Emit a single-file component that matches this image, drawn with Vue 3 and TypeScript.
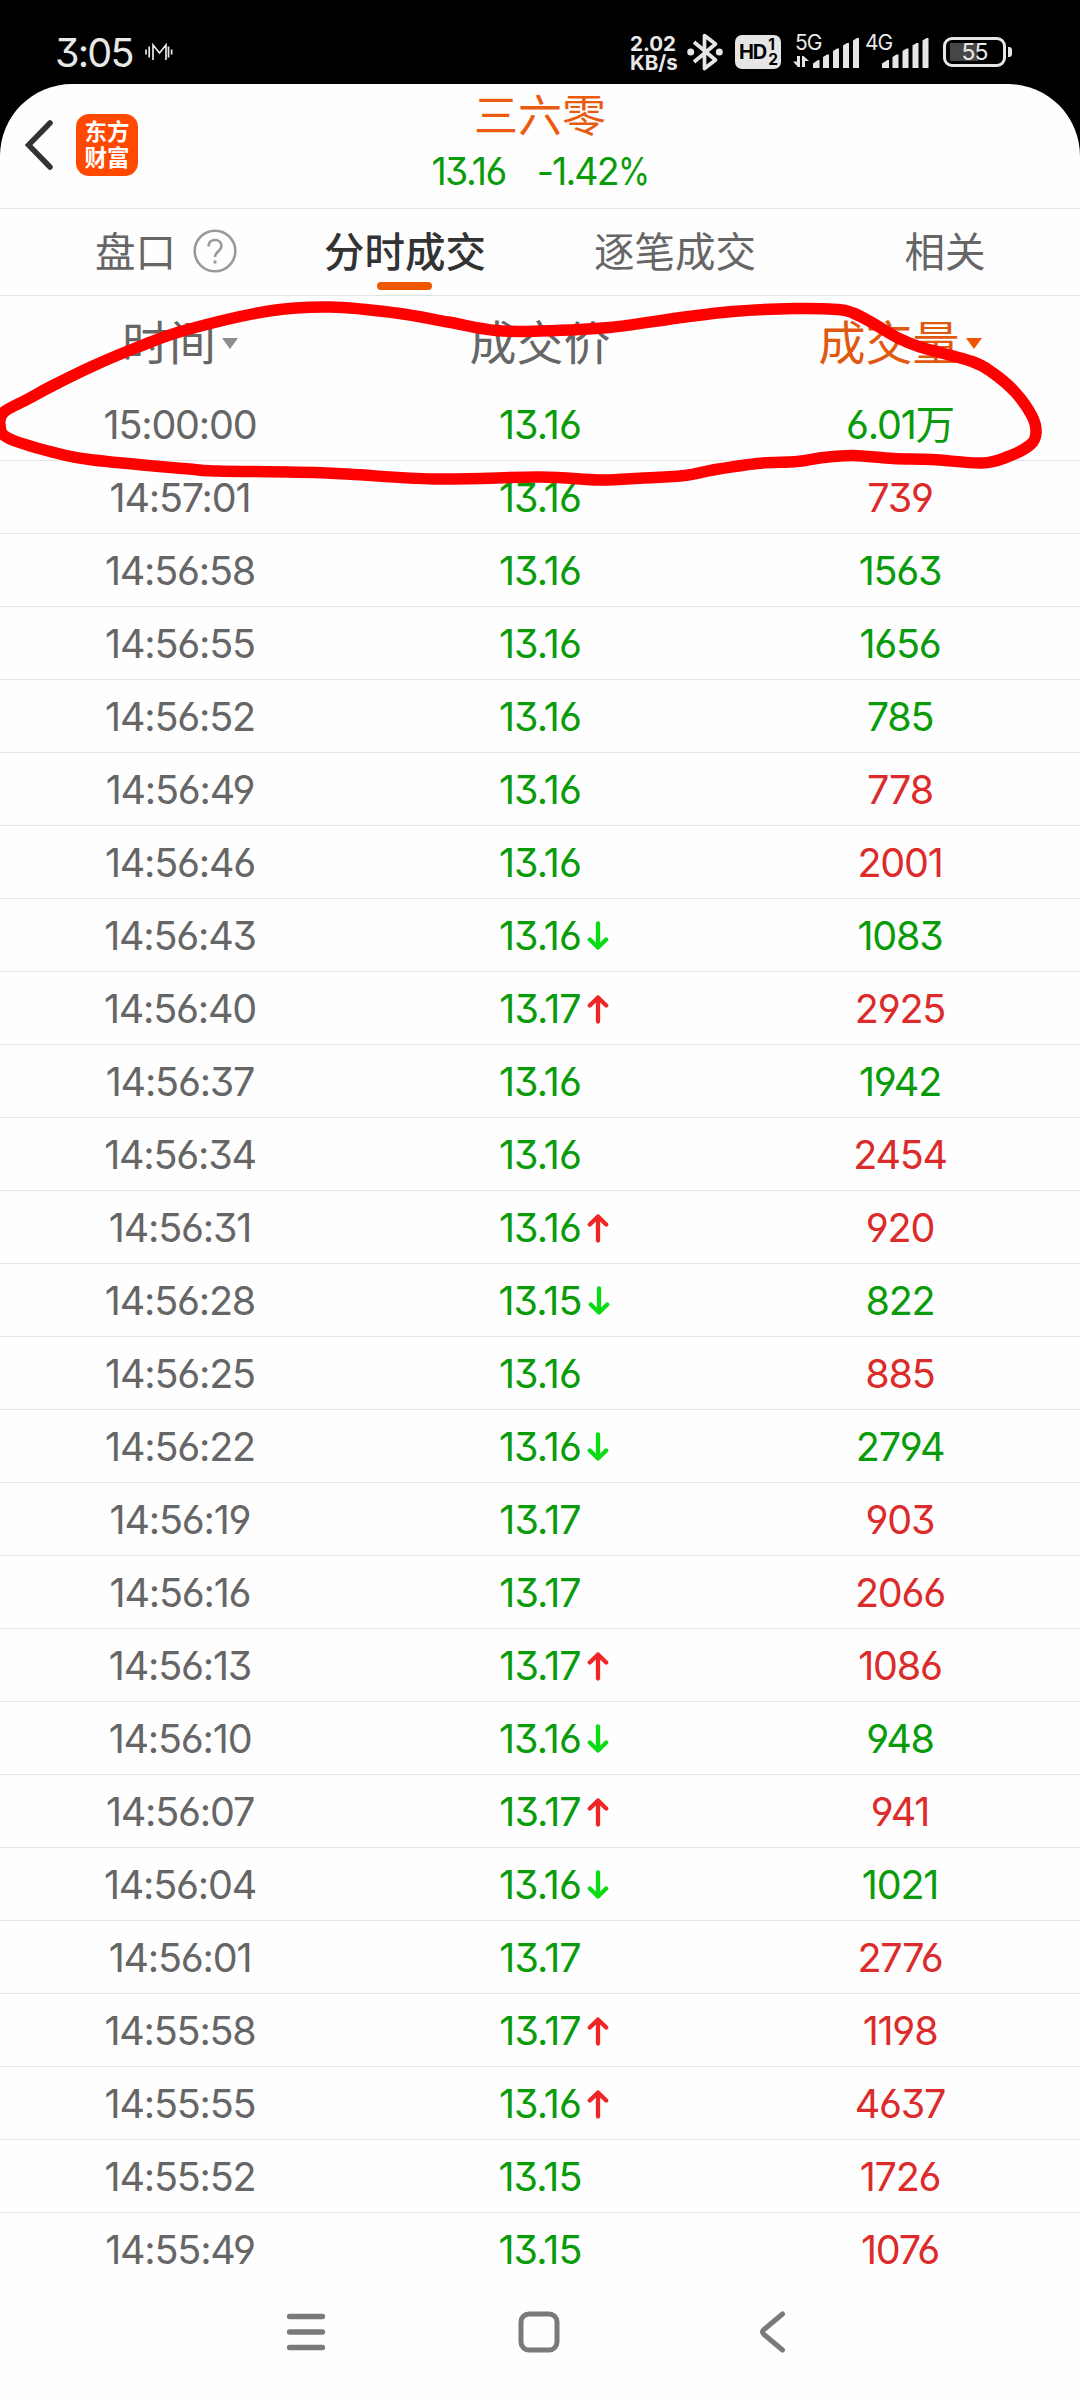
<script setup lang="ts">
type Tone = 'up' | 'down'
interface Trade {
  time: string
  price: string
  volume: string
  tone: Tone
  arrow?: Tone
}

const raw: [string, string, string, Tone, Tone?][] = [
  ['15:00:00', '13.16', '6.01万', 'down'],
  ['14:57:01', '13.16', '739', 'up'],
  ['14:56:58', '13.16', '1563', 'down'],
  ['14:56:55', '13.16', '1656', 'down'],
  ['14:56:52', '13.16', '785', 'down'],
  ['14:56:49', '13.16', '778', 'up'],
  ['14:56:46', '13.16', '2001', 'up'],
  ['14:56:43', '13.16', '1083', 'down', 'down'],
  ['14:56:40', '13.17', '2925', 'up', 'up'],
  ['14:56:37', '13.16', '1942', 'down'],
  ['14:56:34', '13.16', '2454', 'up'],
  ['14:56:31', '13.16', '920', 'up', 'up'],
  ['14:56:28', '13.15', '822', 'down', 'down'],
  ['14:56:25', '13.16', '885', 'up'],
  ['14:56:22', '13.16', '2794', 'down', 'down'],
  ['14:56:19', '13.17', '903', 'up'],
  ['14:56:16', '13.17', '2066', 'up'],
  ['14:56:13', '13.17', '1086', 'up', 'up'],
  ['14:56:10', '13.16', '948', 'down', 'down'],
  ['14:56:07', '13.17', '941', 'up', 'up'],
  ['14:56:04', '13.16', '1021', 'down', 'down'],
  ['14:56:01', '13.17', '2776', 'up'],
  ['14:55:58', '13.17', '1198', 'up', 'up'],
  ['14:55:55', '13.16', '4637', 'up', 'up'],
  ['14:55:52', '13.15', '1726', 'up'],
  ['14:55:49', '13.15', '1076', 'up'],
]
const trades: Trade[] = raw.map(([time, price, volume, tone, arrow]) => ({ time, price, volume, tone, arrow }))

// Hand-drawn marker loop, smoothed through its points
const loop: [number, number][] = [
  [4, 412], [28, 399], [52, 386], [93, 366], [138, 347], [186, 330], [269, 311], [331, 307],
  [396, 313], [448, 322], [496, 330.5], [540, 331], [609, 327.5], [678, 318], [733, 311.5], [795, 308.5],
  [838, 309.5], [853, 313], [870, 321.5], [897, 337.5], [920, 347], [972, 361.5], [993, 373], [1015, 392],
  [1032, 416], [1036, 433], [1030, 445], [1007, 457], [982, 463], [932, 459.5], [893, 458.5], [853, 455.5],
  [823, 457.5], [797, 461.5], [757, 463.5], [713, 470], [685, 475.5], [643, 478], [599, 480], [540, 477],
  [434, 479], [327, 473], [217, 471], [189, 469], [93, 460], [52, 452], [8, 438], [0, 425],
]
const n = loop.length
const marker =
  `M${loop[0][0]} ${loop[0][1]}` +
  loop
    .map((p, i) => {
      const a = loop[(i - 1 + n) % n]
      const q = loop[(i + 1) % n]
      const b = loop[(i + 2) % n]
      const c1 = [p[0] + (q[0] - a[0]) / 6, p[1] + (q[1] - a[1]) / 6]
      const c2 = [q[0] - (b[0] - p[0]) / 6, q[1] - (b[1] - p[1]) / 6]
      return `C${c1.join(' ')} ${c2.join(' ')} ${q.join(' ')}`
    })
    .join('') +
  'Z'
</script>

<template>
  <div class="screen">
    <div class="status">
      <span class="clock">3:05</span>
      <svg class="wave" width="28" height="18" viewBox="0 0 28 18" fill="none" stroke="#e8e8e8" stroke-width="1.7">
        <path d="M1 6.500v5M4.200 3.500v11M8 17V2l6.500 8L21 2v15M23.500 3.500v11M26.600 6.500v5" />
      </svg>
      <div class="speed"><span>2.02</span><span>KB/s</span></div>
      <svg class="bt" width="36" height="40" viewBox="0 0 36 40" fill="none" stroke="#e6e6e6" stroke-width="3.700" stroke-linejoin="round">
        <path d="M7 10 28.500 28 17.500 36.500V3.500L28.500 12 7 30" />
        <g fill="#e6e6e6" stroke="none"><circle cx="3.700" cy="20" r="3.500" /><circle cx="32.300" cy="20" r="3.500" /></g>
      </svg>
      <div class="hd"><b>HD</b><span class="nums"><i>1</i><i>2</i></span></div>
      <div class="sig five">
        <span>5G</span>
        <svg width="68" height="32" viewBox="0 0 68 32" fill="#e6e6e6">
          <path d="M21 31v-4.500l5-3.500h1.500v8zM31 31V20l4-2.500h2V31zM41 31V14l4-2.500h2V31zM51 31V8.500l4-2.500h2V31zM61 31V3.500l4-2.500h2V31z" />
          <path d="M5 19h3v11H6L1 24.500h4zM10 19h1.500L17 24h-4v6h-3z" />
        </svg>
      </div>
      <div class="sig four">
        <span>4G</span>
        <svg width="68" height="32" viewBox="0 0 68 32" fill="#e6e6e6">
          <path d="M20 31v-4.500l5.500-3.500h1.500v8zM30.500 31V20l4-2.500h2V31zM40.500 31V14l4-2.500h2V31zM50.500 31V8.500l4-2.500h2V31zM60.500 31V3.500l4-2.500h2V31z" />
        </svg>
      </div>
      <div class="battery"><span>55</span></div>
      <div class="tip"></div>
    </div>

    <div class="app">
      <header class="head">
        <svg class="back" width="30" height="52" viewBox="0 0 30 52" fill="none" stroke="#333" stroke-width="5.500" stroke-linecap="round">
          <path d="M25 4 3.500 26 25 48" />
        </svg>
        <div class="logo"><span>东方</span><span>财富</span></div>
        <div class="title">
          <div class="name">三六零</div>
          <div class="quote"><span>13.16</span><span class="pct">-1.42<span class="unit">%</span></span></div>
        </div>
      </header>

      <nav class="tabs">
        <div class="tab first">
          <span>盘口</span>
          <svg class="help" width="44" height="44" viewBox="0 0 44 44" fill="none" stroke="#999" stroke-width="2.600">
            <circle cx="22" cy="22" r="20.300" />
            <path d="M15.500 17.500c0-4 2.700-6.500 6.500-6.500s6.500 2.500 6.500 6c0 5-6.500 5.500-6.500 11" />
            <circle cx="22" cy="33" r="1.700" fill="#999" stroke="none" />
          </svg>
        </div>
        <div class="tab on"><span>分时成交</span></div>
        <div class="tab"><span>逐笔成交</span></div>
        <div class="tab"><span>相关</span></div>
      </nav>

      <div class="cols">
        <div class="th"><span>时间</span><i class="tri"></i></div>
        <div class="th"><span>成交价</span></div>
        <div class="th hot"><span>成交量</span><i class="tri"></i></div>
      </div>

      <div class="rows">
        <div v-for="t in trades" :key="t.time" class="row">
          <div class="cell">{{ t.time }}</div>
          <div class="cell mid down">
            <span class="price">{{ t.price
              }}<svg v-if="t.arrow" class="arrow" width="22" height="30" viewBox="0 0 22 30" fill="none" :stroke="t.arrow === 'up' ? '#f02626' : '#0adb14'" stroke-width="4.300" stroke-linecap="round" stroke-linejoin="round">
                <path v-if="t.arrow === 'up'" d="M11 27.500V3.500M2.800 11.500 11 3.500l8.200 8" />
                <path v-else d="M11 2.500v24M2.800 18.500 11 26.500l8.200-8" />
              </svg>
            </span>
          </div>
          <div class="cell" :class="t.tone">{{ t.volume }}</div>
        </div>
      </div>

      <div class="navbar">
        <svg width="360" height="60" viewBox="0 0 360 60" fill="none" stroke="#7b797b" stroke-width="5.300" stroke-linecap="round">
          <path d="M109.500 16.500h33M109.500 32h33M109.500 47.500h33" transform="translate(180)" />
        </svg>
        <svg width="360" height="60" viewBox="0 0 360 60" fill="none" stroke="#7b797b" stroke-width="5">
          <rect x="161" y="14" width="36" height="36" rx="8" />
        </svg>
        <svg width="360" height="60" viewBox="0 0 360 60" fill="none" stroke="#7b797b" stroke-width="5" stroke-linecap="round" stroke-linejoin="round">
          <path d="M62.500 14 44 29.500q-3 2.500 0 5L62.500 50" />
        </svg>
      </div>
    </div>

    <svg class="marker" width="1080" height="600" viewBox="0 0 1080 600" fill="none" stroke="#fe0000" stroke-width="11.500" stroke-linejoin="round">
      <path :d="marker" />
    </svg>
  </div>
</template>

<style>
body {
  margin: 0;
  background: #000;
}
</style>

<style scoped>
.screen {
  position: relative;
  width: 1080px;
  height: 2400px;
  overflow: hidden;
  background: #000;
  display: flex;
  flex-direction: column;
  font-family: Inter, 'Noto Sans CJK SC', sans-serif;
  font-feature-settings: 'cv03', 'cv04', 'cv09';
  color: #666;
}
.status {
  height: 84px;
  flex: none;
  display: flex;
  align-items: flex-start;
  color: #e8e8e8;
}
.clock {
  margin: 29px 0 0 55px;
  width: 90px;
  font-size: 39.5px;
  line-height: 48px;
  letter-spacing: -1.8px;
}
.wave {
  margin-top: 43px;
}
.speed {
  margin: 35px 0 0 457px;
  width: 57px;
  display: flex;
  flex-direction: column;
  font-size: 20.5px;
  font-weight: 700;
  line-height: 18.5px;
}
.bt {
  margin-top: 32px;
}
.hd {
  margin: 35px 0 0 12px;
  width: 46px;
  height: 34px;
  border-radius: 7px;
  background: #e6e6e6;
  color: #000;
  display: flex;
  align-items: center;
  justify-content: center;
  font-size: 20px;
  letter-spacing: -1px;
}
.nums {
  display: flex;
  flex-direction: column;
  font-size: 15.5px;
  line-height: 15px;
  margin-left: 2px;
}
.nums i {
  font-style: normal;
  font-weight: 700;
}
.sig {
  position: relative;
  width: 68px;
  height: 32px;
  margin-top: 37px;
}
.five {
  margin-left: 11px;
}
.four {
  margin-left: 2px;
}
.sig span {
  position: absolute;
  left: 3px;
  top: -5px;
  font-size: 21px;
  line-height: 21px;
  letter-spacing: -1px;
}
.battery {
  margin: 37px 0 0 13px;
  box-sizing: border-box;
  width: 63px;
  height: 30px;
  border: 3px solid #e6e6e6;
  border-radius: 9px;
  background: linear-gradient(#464646, #464646) 4px 3px / 28px 18px no-repeat;
  display: flex;
  align-items: center;
  justify-content: center;
  font-size: 23px;
  letter-spacing: -1px;
}
.tip {
  margin: 47px 0 0 2px;
  width: 4px;
  height: 10px;
  border-radius: 0 3px 3px 0;
  background: #e6e6e6;
}
.app {
  flex: 1;
  background: #fefefe;
  border-radius: 72px 72px 0 0;
  display: flex;
  flex-direction: column;
}
.head {
  height: 124px;
  border-bottom: 1px solid #e2e2e2;
  display: flex;
  align-items: flex-start;
}
.back {
  margin: 35px 0 0 25px;
}
.logo {
  margin: 30px 0 0 21px;
  width: 62px;
  height: 62px;
  border-radius: 13px;
  background: #ff4800;
  color: #fff;
  display: flex;
  flex-direction: column;
  align-items: center;
  justify-content: center;
  font-size: 22.5px;
  font-weight: 700;
  line-height: 26px;
}
.title {
  width: 804px;
  display: flex;
  flex-direction: column;
  align-items: center;
}
.name {
  margin-top: 5px;
  font-size: 44px;
  line-height: 54px;
  color: #ea5b10;
}
.quote {
  display: flex;
  gap: 31px;
  margin-top: 2px;
  font-size: 37.5px;
  line-height: 54px;
  letter-spacing: -1.6px;
  color: #0a9b0a;
}
.pct {
  display: flex;
  letter-spacing: -1.9px;
}
.unit {
  margin-right: -4px;
  transform: scaleX(0.87);
  transform-origin: left;
}
.tabs {
  height: 86px;
  flex: none;
  border-bottom: 1px solid #e2e2e2;
  display: flex;
}
.tab {
  position: relative;
  box-sizing: border-box;
  width: 270px;
  display: flex;
  align-items: center;
  justify-content: center;
  font-size: 40.5px;
  line-height: 60px;
  padding-top: 2px;
}
.first {
  padding-left: 62px;
}
.help {
  margin: -4px 0 0 17px;
}
.on {
  color: #333;
  font-weight: 500;
}
.on::after {
  content: '';
  position: absolute;
  left: 107px;
  bottom: 5px;
  width: 55px;
  height: 8px;
  border-radius: 4px;
  background: #ef5600;
}
.cols {
  height: 92px;
  flex: none;
  display: flex;
}
.th {
  box-sizing: border-box;
  width: 360px;
  display: flex;
  align-items: center;
  justify-content: center;
  padding-bottom: 6px;
  font-size: 47px;
}
.tri {
  width: 0;
  margin: 8px 0 0 6px;
  border: 8px solid transparent;
  border-top: 11px solid #8c8c91;
  border-bottom: 0;
}
.hot {
  color: #df5a10;
}
.hot .tri {
  border-top-color: #ef5600;
}
.rows {
  flex: none;
}
.row {
  display: flex;
  align-items: baseline;
  height: 72px;
  border-bottom: 1px solid #e4e4e4;
}
.row:last-child {
  border-bottom-color: transparent;
}
.cell {
  width: 360px;
  text-align: center;
  font-size: 39.5px;
  line-height: 74px;
  letter-spacing: -1.2px;
}
.mid {
  letter-spacing: -0.9px;
}
.price {
  position: relative;
}
.arrow {
  position: absolute;
  left: calc(100% + 6px);
  top: 9px;
}
.down {
  color: #0a9b0a;
}
.up {
  color: #db2b2b;
}
.navbar {
  margin-top: 14px;
  display: flex;
}
.navbar svg {
  flex: none;
}
.marker {
  position: absolute;
  left: 0;
  top: 0;
}
</style>
